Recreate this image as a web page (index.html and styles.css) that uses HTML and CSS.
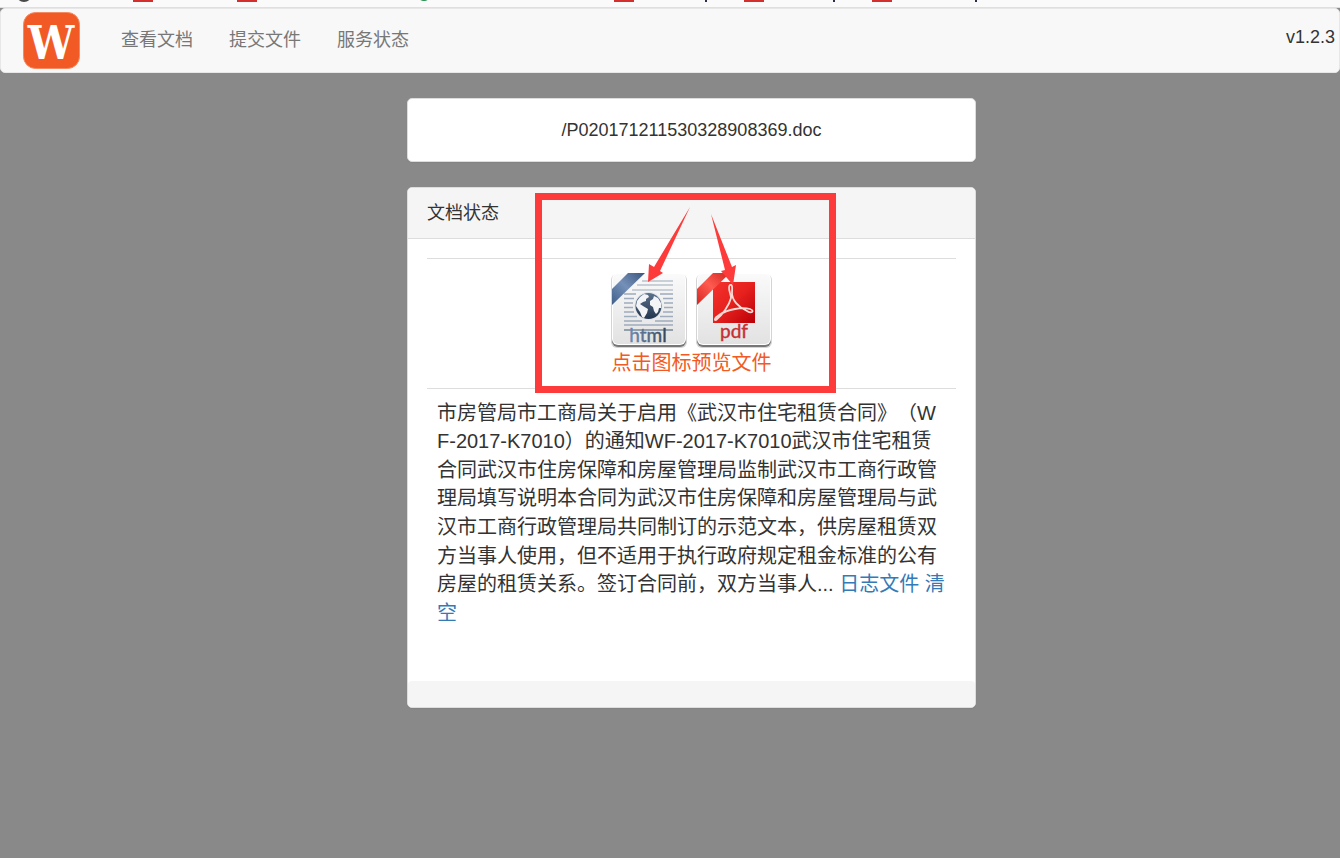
FILE: index.html
```
<!DOCTYPE html>
<html lang="zh-CN">

<head>
    <meta charset="UTF-8">
    <meta name="viewport" content="width=device-width, initial-scale=1.0">
    <title>文档状态</title>
    <link rel="stylesheet" href="styles.css">
</head>

<body>

    <div class="bookmarks">
        <svg width="1340" height="7" viewBox="0 0 1340 7" aria-hidden="true">
            <circle cx="24" cy="-6" r="8" fill="#4a4a4a" />
            <circle cx="424" cy="-6" r="7" fill="#1f8f4d" />
            <path d="M133 0h20v2h-20zM237 0h20v2h-20zM614 0h20v2h-20zM744 0h20v2h-20zM872 0h20v2h-20z" fill="#d32f2f" />
            <path d="M705 0h2v2h-2zM833 0h2v2h-2zM975 0h2v2h-2z" fill="#2b2b4a" />
        </svg>
    </div>

    <nav class="navbar">
        <a class="navbar-logo" href="#" aria-label="首页">
            <svg width="57" height="57" viewBox="0 0 57 57">
                <rect x="0.5" y="0.5" width="56" height="56" rx="12" fill="#f15a24" stroke="#f58a62" />
                <text class="logo-letter" x="28" y="47" text-anchor="middle">W</text>
            </svg>
        </a>
        <div class="navbar-menu">
            <a class="menu-item" href="#">查看文档</a>
            <a class="menu-item" href="#">提交文件</a>
            <a class="menu-item" href="#">服务状态</a>
        </div>
        <span class="version">v1.2.3</span>
    </nav>

    <div class="page">
        <main class="content">
            <div class="panel file-name">/P020171211530328908369.doc</div>

            <div class="panel status">
                <h1 class="panel-heading">文档状态</h1>
                <div class="panel-body">
                    <div class="row preview">
                        <div class="icons">
                            <a href="#" aria-label="html">
                                <svg class="icon" width="80" height="80" viewBox="0 0 80 80">
                                    <defs>
                                        <linearGradient id="tile" x1="0" y1="0" x2="0" y2="1">
                                            <stop offset="0" stop-color="#fafafa" />
                                            <stop offset="1" stop-color="#e2e2e2" />
                                        </linearGradient>
                                        <linearGradient id="blue" x1="0" y1="1" x2="1" y2="0">
                                            <stop offset="0" stop-color="#3f5f8a" />
                                            <stop offset="0.5" stop-color="#7590b8" />
                                            <stop offset="1" stop-color="#3a567e" />
                                        </linearGradient>
                                        <linearGradient id="globe" x1="0" y1="0" x2="0" y2="1">
                                            <stop offset="0" stop-color="#5c718c" />
                                            <stop offset="1" stop-color="#24364e" />
                                        </linearGradient>
                                        <linearGradient id="word" x1="0" y1="0" x2="1" y2="0">
                                            <stop offset="0" stop-color="#6d8ab0" />
                                            <stop offset="1" stop-color="#35455b" />
                                        </linearGradient>
                                    </defs>
                                    <rect x="2" y="5" width="76" height="74" rx="6" fill="#d4d4d4" />
                                    <rect x="3" y="6" width="74" height="72" rx="6" fill="#777" />
                                    <rect x="3" y="4" width="74" height="72" rx="6" fill="#fff" />
                                    <rect x="4" y="5" width="72" height="70" rx="5" fill="url(#tile)" />
                                    <path d="M3 36V20L19 4H36z" fill="url(#blue)" />
                                    <g stroke-width="1.5" fill="none">
                                        <path d="M33 12H64M28 16H64M23 21H64" stroke="#b9c2cd" />
                                        <path d="M15 25H27M51 25H64M15 29.500H25M54 29.500H64M15 34H24M55 34H64M15 38.500H24M55 38.500H64M15 43H25M54 43H64M15 47.500H28M51 47.500H64M15 52H33M46 52H64M15 56H64" stroke="#9eacbd" />
                                        <path d="M15 61H64" stroke="#788799" />
                                    </g>
                                    <circle cx="39.500" cy="37" r="14" fill="#dfe5eb" />
                                    <circle cx="39.500" cy="37" r="13" fill="url(#globe)" />
                                    <path d="M28 32L31 28L35 25L39 26L40 28L37 30L37 32L34 33L31 35L34 37L39 40L38 44L35 49L33 48L31 43L29 40L27 37zM45 27L49 29L52 34L52 39L50 39L49 43L47 45L45 42L44 38L41 36L41 32L44 30z" fill="#f2f4f6" />
                                    <text class="icon-word" x="39" y="73" text-anchor="middle" fill="url(#word)" stroke="url(#word)">html</text>
                                </svg>
                            </a>
                            <a href="#" aria-label="pdf">
                                <svg class="icon" width="80" height="80" viewBox="0 0 80 80">
                                    <defs>
                                        <linearGradient id="red" x1="0" y1="0" x2="1" y2="1">
                                            <stop offset="0" stop-color="#f5322f" />
                                            <stop offset="0.5" stop-color="#e5201d" />
                                            <stop offset="1" stop-color="#b90008" />
                                        </linearGradient>
                                        <linearGradient id="ribbon" x1="0" y1="1" x2="1" y2="0">
                                            <stop offset="0" stop-color="#d62622" />
                                            <stop offset="0.5" stop-color="#ff5b50" />
                                            <stop offset="1" stop-color="#d02420" />
                                        </linearGradient>
                                    </defs>
                                    <rect x="2" y="5" width="76" height="74" rx="6" fill="#d4d4d4" />
                                    <rect x="3" y="6" width="74" height="72" rx="6" fill="#777" />
                                    <rect x="3" y="4" width="74" height="72" rx="6" fill="#fff" />
                                    <rect x="4" y="5" width="72" height="70" rx="5" fill="url(#tile)" />
                                    <rect x="19" y="13" width="42" height="41" fill="url(#red)" />
                                    <path d="M3 36V20L19 4H36z" fill="url(#ribbon)" />
                                    <path d="M36 16C33 18 37 25 37 29C35 37 28 46 23 50C20 53 20 49 25 46C34 40 48 38 56 40C61 42 58 45 53 42C44 38 38 31 38 24C38 20 39 15 36 16z" fill="none" stroke="#fbdad6" stroke-width="1.8" stroke-linejoin="round" />
                                    <text class="icon-word" x="40" y="69" text-anchor="middle" fill="#c62f32" stroke="#c62f32">pdf</text>
                                </svg>
                            </a>
                        </div>
                        <a class="preview-link" href="#">点击图标预览文件</a>
                    </div>
                    <div class="row summary">市房管局市工商局关于启用《武汉市住宅租赁合同》（WF-2017-K7010）的通知WF-2017-K7010武汉市住宅租赁合同武汉市住房保障和房屋管理局监制武汉市工商行政管理局填写说明本合同为武汉市住房保障和房屋管理局与武汉市工商行政管理局共同制订的示范文本，供房屋租赁双方当事人使用，但不适用于执行政府规定租金标准的公有房屋的租赁关系。签订合同前，双方当事人... <a href="#">日志文件</a> <a href="#">清空</a></div>
                </div>
                <div class="panel-footer"></div>

                <!-- 标注框和箭头 -->
                <svg class="mark" width="301" height="200" viewBox="0 0 301 200" aria-hidden="true">
                    <rect x="3.500" y="3.500" width="294" height="193" fill="none" stroke="#fd3b3b" stroke-width="7" />
                    <path d="M155 14L125 78L128 80L113 89L114 71L119 74z" fill="#fd3b3b" />
                    <path d="M176 21L197 74L201 72L198 92L186 78L190 77z" fill="#fd3b3b" />
                </svg>
            </div>
        </main>
    </div>

</body>

</html>
```
FILE: styles.css
```
* {
    margin: 0;
    padding: 0;
    box-sizing: border-box;
}

body {
    font-family: "Liberation Sans", "Noto Sans CJK SC", sans-serif;
    font-size: 18px;
    color: #333;
    background-color: #898989;
}

a {
    color: #337ab7;
    text-decoration: none;
}

svg {
    display: block;
}

.bookmarks {
    height: 8px;
    overflow: hidden;
    background-color: #fafafa;
    border-bottom: 1px solid #dfdfdf;
}

.navbar {
    display: flex;
    align-items: flex-start;
    height: 65px;
    padding: 3px 4px 0 22px;
    background-color: #f8f8f8;
    border: 1px solid #e7e7e7;
    border-radius: 5px;
}

.logo-letter {
    font-family: "DejaVu Serif Condensed", "DejaVu Serif", serif;
    font-size: 46px;
    font-weight: bold;
    fill: #fff;
}

.navbar-menu {
    display: flex;
    gap: 36px;
    margin-left: 41px;
    padding-top: 15px;
}

.menu-item {
    line-height: 26px;
    color: #777;
}

.version {
    margin-left: auto;
    padding-top: 13px;
    line-height: 25px;
}

/* 左右留白与内容区按比例分配 */
.page {
    display: grid;
    grid-template-columns: 407fr 569fr 364fr;
    padding-top: 25px;
}

.content {
    grid-column: 2;
}

.panel {
    position: relative;
    margin-bottom: 25px;
    background-color: #fff;
    border: 1px solid #ddd;
    border-radius: 5px;
    box-shadow: 0 1px 1px rgba(0, 0, 0, 0.05);
}

.file-name {
    padding: 19px;
    line-height: 24px;
    text-align: center;
}

.panel-heading {
    padding: 12px 19px;
    font-size: 18px;
    font-weight: normal;
    line-height: 26px;
    background-color: #f5f5f5;
    border-bottom: 1px solid #ddd;
    border-radius: 4px 4px 0 0;
}

.panel-body {
    min-height: 442px;
    padding: 19px;
}

.row {
    padding: 10px;
    font-size: 20px;
    line-height: 1.43;
    border-top: 1px solid #ddd;
}

.preview {
    text-align: center;
}

.icons {
    display: flex;
    justify-content: center;
    gap: 5px;
}

.icon-word {
    font-family: Lato, sans-serif;
    font-size: 19px;
    stroke-width: 0.4;
}

.preview-link {
    display: block;
    color: #f15a24;
}

.summary {
    word-break: break-all;
    text-spacing-trim: space-all;
}

.panel-footer {
    height: 26px;
    background-color: #f5f5f5;
    border-radius: 4px;
}

.mark {
    position: absolute;
    top: 5px;
    left: 127px;
    pointer-events: none;
}
```
